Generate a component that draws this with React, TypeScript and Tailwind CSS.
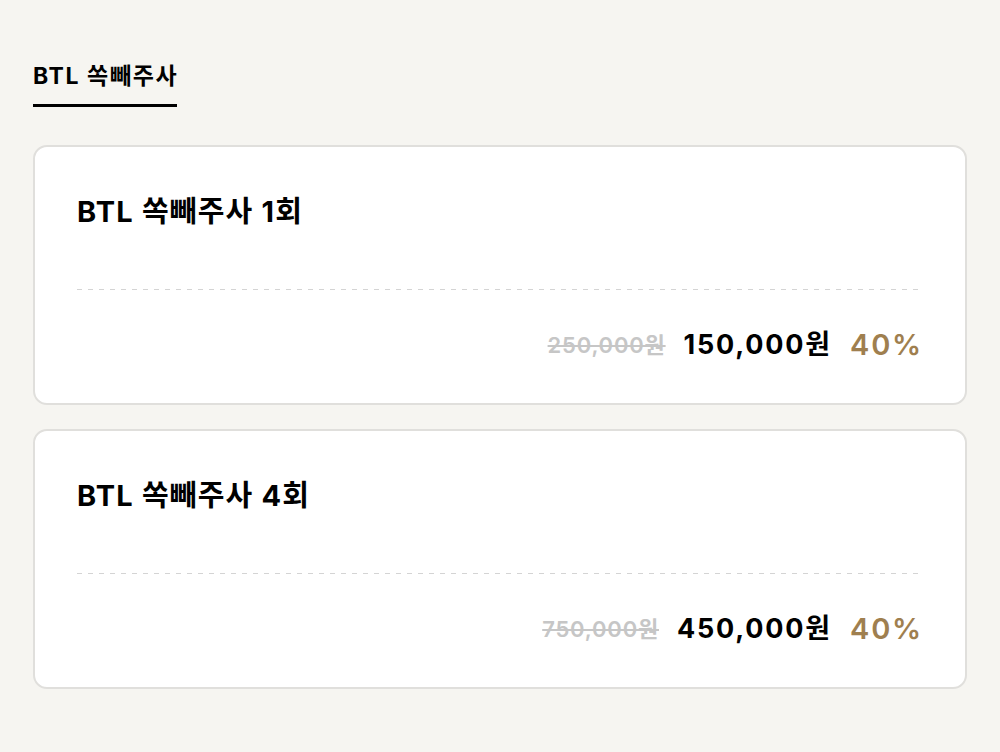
import React from "react";

const font = { fontFamily: 'Inter, "Noto Sans CJK KR", sans-serif' };

function Card({ title, orig, price, pct }: { title: string; orig: string; price: string; pct: string }) {
  return (
    <div className="rounded-[14px] border-2 border-[#e0dfdc] bg-white px-[42px] pt-[49px] pb-[40px]">
      <div className="text-[29px] leading-[32px] font-bold text-black tracking-[1.2px]">{title}</div>
      <div className="mt-[61px] h-px bg-[linear-gradient(to_right,#d4d4d4_0,#d4d4d4_5px,transparent_5px)] bg-[length:11px_1px] bg-repeat-x" />
      <div className="mt-[37px] flex items-center justify-end h-[36px]">
        <span className="text-[22px] text-[#c6c6c6] line-through font-semibold tracking-[0.8px] mr-[18px]">{orig}</span>
        <span className="text-[27px] font-bold text-black tracking-[1.8px] mr-[18px]">{price}</span>
        <span className="text-[29px] font-semibold text-[#9f7f4f] tracking-[1.8px]">{pct}</span>
      </div>
    </div>
  );
}

export default function App() {
  return (
    <div className="min-h-[752px] w-[1000px] bg-[#f6f5f1] px-[33px] pt-[60px]" style={font}>
      <div className="inline-flex flex-col">
        <div className="text-[23px] leading-[32px] font-bold text-black tracking-[1.6px]">BTL 쏙빼주사</div>
        <div className="mt-[12px] h-[3px] w-[144px] bg-black" />
      </div>
      <div className="mt-[38px] flex flex-col gap-[24px]">
        <Card title="BTL 쏙빼주사 1회" orig="250,000원" price="150,000원" pct="40%" />
        <Card title="BTL 쏙빼주사 4회" orig="750,000원" price="450,000원" pct="40%" />
      </div>
    </div>
  );
}
